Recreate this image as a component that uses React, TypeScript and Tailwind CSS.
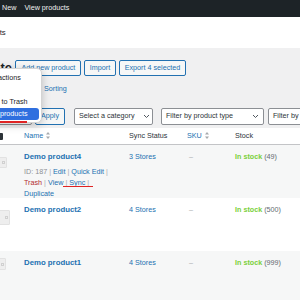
import React from "react";

const Sort = () => (
  <svg width="4" height="7" viewBox="0 0 4 7" className="ml-[3px] shrink-0">
    <path d="M2 0 L4 2.6 L0 2.6 Z" fill="#a7aaad" />
    <path d="M2 7 L4 4.4 L0 4.4 Z" fill="#a7aaad" />
  </svg>
);

const Chevron = () => (
  <svg width="7" height="5" viewBox="0 0 7 5" className="shrink-0">
    <path d="M1 1 L3.5 3.5 L6 1" fill="none" stroke="#50575e" strokeWidth="1" />
  </svg>
);

const Sep = () => <span className="text-[#a7aaad]"> | </span>;

function Thumb({ w, h, mt }: { w: string; h: string; mt: string }) {
  return (
    <div className={`${w} ${h} ${mt} ml-[-1px] bg-[#eeeeee] border border-[#e2e2e2] rounded-r-[1px] flex items-center justify-end pr-[1px]`}>
      <div className="w-[3px] h-[3px] border border-[#d0d0d0]" />
    </div>
  );
}

function Row({
  bg,
  name,
  stores,
  stock,
  thumb,
  actions,
}: {
  bg: string;
  name: string;
  stores: string;
  stock: string;
  thumb: React.ReactNode;
  actions?: boolean;
}) {
  return (
    <div className={`grid grid-cols-[24px_105px_58px_48px_1fr] h-[53px] ${bg}`}>
      <div>{thumb}</div>
      <div className="pt-[7px]">
        <div className="leading-[10px] text-[7.8px] font-bold text-[#2271b1] whitespace-nowrap">{name}</div>
        {actions && (
          <div className="mt-[4px] leading-[11px] text-[7.2px] whitespace-nowrap">
            <div>
              <span className="text-[#8c8f94]">ID: 187</span>
              <Sep />
              <span className="text-[#2271b1]">Edit</span>
              <Sep />
              <span className="text-[#2271b1]">Quick Edit</span>
              <Sep />
            </div>
            <div>
              <span className="text-[#b32d2e]">Trash</span>
              <Sep />
              <span className="text-[#2271b1]">View</span>
              <Sep />
              <span className="text-[#2271b1]">Sync</span>
              <Sep />
            </div>
            <div className="text-[#2271b1]">Duplicate</div>
          </div>
        )}
      </div>
      <div className="pt-[7px] leading-[10px] text-[#2271b1] whitespace-nowrap">{stores}</div>
      <div className="pt-[7px] leading-[10px] pl-[2px] text-[#a7aaad]">–</div>
      <div className="pt-[7px] leading-[10px] whitespace-nowrap">
        <span className="font-bold text-[#7ad03a]">In stock</span>
        <span className="text-[#646970]"> ({stock})</span>
      </div>
    </div>
  );
}

export default function App() {
  return (
    <div className="w-[300px] h-[300px] overflow-hidden bg-[#f0f0f1] relative font-['Liberation_Sans',Arial,sans-serif] text-[7.2px] text-[#2c3338]">
      {/* admin bar */}
      <div className="h-[17px] bg-[#1d2327] flex items-center text-[#f0f0f1] whitespace-nowrap">
        <span className="ml-[2px] shrink-0">New</span>
        <span className="ml-[8px] shrink-0">View products</span>
      </div>

      {/* white header */}
      <div className="h-[31px] bg-white flex items-center whitespace-nowrap">
        <span className="ml-[-25px] shrink-0 text-[7.8px] text-[#1d2327]">Products</span>
      </div>

      {/* title + buttons */}
      <div className="mt-[12px] h-[16px] flex items-center whitespace-nowrap">
        <span className="ml-[0.5px] shrink-0 text-[12.8px] font-bold text-[#1d2327] leading-none">te</span>
        <div className="ml-[3.5px] flex gap-[2.5px] shrink-0">
          {["Add new product", "Import", "Export 4 selected"].map((t) => (
            <div
              key={t}
              className="h-[16px] px-[5px] shrink-0 border border-[#2271b1] text-[#2271b1] bg-[#f6f7f7] rounded-[2px] flex items-center"
            >
              {t}
            </div>
          ))}
        </div>
      </div>

      {/* subsubsub */}
      <div className="mt-[8px] h-[10px] leading-[10px] pl-[44px] text-[#2271b1] whitespace-nowrap">Sorting</div>

      {/* filters */}
      <div className="mt-[14px] h-[17px] flex items-stretch whitespace-nowrap">
        <div className="ml-[-50px] w-[82px] shrink-0 bg-white border border-[#8c8f94] rounded-[2px]" />
        <div className="ml-[3px] shrink-0 px-[5px] border border-[#2271b1] text-[#2271b1] bg-[#f6f7f7] rounded-[2px] flex items-center">
          Apply
        </div>
        <div className="ml-[9px] w-[79px] shrink-0 bg-white border border-[#8c8f94] rounded-[2px] flex items-center justify-between pl-[4px] pr-[2px]">
          <span>Select a category</span>
          <Chevron />
        </div>
        <div className="ml-[8px] w-[103px] shrink-0 bg-white border border-[#8c8f94] rounded-[2px] flex items-center justify-between pl-[4px] pr-[4px]">
          <span>Filter by product type</span>
          <Chevron />
        </div>
        <div className="ml-[4px] w-[80px] shrink-0 bg-white border border-[#8c8f94] rounded-[2px] flex items-center pl-[4px]">
          <span>Filter by stock status</span>
        </div>
      </div>

      {/* table */}
      <div className="mt-[3px]">
        <div className="grid grid-cols-[24px_105px_58px_48px_1fr] h-[17px] bg-white border-b border-[#c3c4c7] items-center whitespace-nowrap">
          <div>
            <div className="ml-[-6px] w-[9px] h-[7px] bg-[#2c3338] rounded-[1px]" />
          </div>
          <div className="flex items-center text-[#2271b1]">
            Name
            <Sort />
          </div>
          <div>Sync Status</div>
          <div className="flex items-center text-[#2271b1]">
            SKU
            <Sort />
          </div>
          <div>Stock</div>
        </div>
        <Row
          bg="bg-[#f6f7f7]"
          name="Demo product4"
          stores="3 Stores"
          stock="49"
          actions
          thumb={<Thumb w="w-[8px]" h="h-[11px]" mt="mt-[12px]" />}
        />
        <Row
          bg="bg-white"
          name="Demo product2"
          stores="4 Stores"
          stock="500"
          thumb={<Thumb w="w-[11px]" h="h-[15px]" mt="mt-[12px]" />}
        />
        <Row
          bg="bg-[#f6f7f7]"
          name="Demo product1"
          stores="4 Stores"
          stock="999"
          thumb={<Thumb w="w-[7px]" h="h-[12px]" mt="mt-[7px]" />}
        />
      </div>

      {/* open native dropdown menu */}
      <div className="absolute left-[-40px] top-[68px] w-[82px] h-[55px] bg-white rounded-[5px] border border-[#d4d4d4] shadow-[0_2px_8px_rgba(0,0,0,0.22)] pt-[3px] whitespace-nowrap text-[#1d1d1f]">
        <div className="h-[12px] leading-[12px] pl-[21px]">Bulk actions</div>
        <div className="h-[12px] leading-[12px] pl-[21px]">Edit</div>
        <div className="h-[12px] leading-[12px] pl-[21px]">Move to Trash</div>
        <div className="h-[12px] leading-[12px] pl-[18px] ml-[3px] mr-[2px] rounded-[3px] bg-[#2f6fdf] text-white">
          Sync products
        </div>
      </div>

      {/* red annotation underlines */}
      <div className="absolute left-0 top-[121px] w-[27px] h-[1.5px] bg-[#e02424]" />
      <div className="absolute left-[63px] top-[185.5px] w-[30px] h-[1.5px] bg-[#e02424]" />
    </div>
  );
}
